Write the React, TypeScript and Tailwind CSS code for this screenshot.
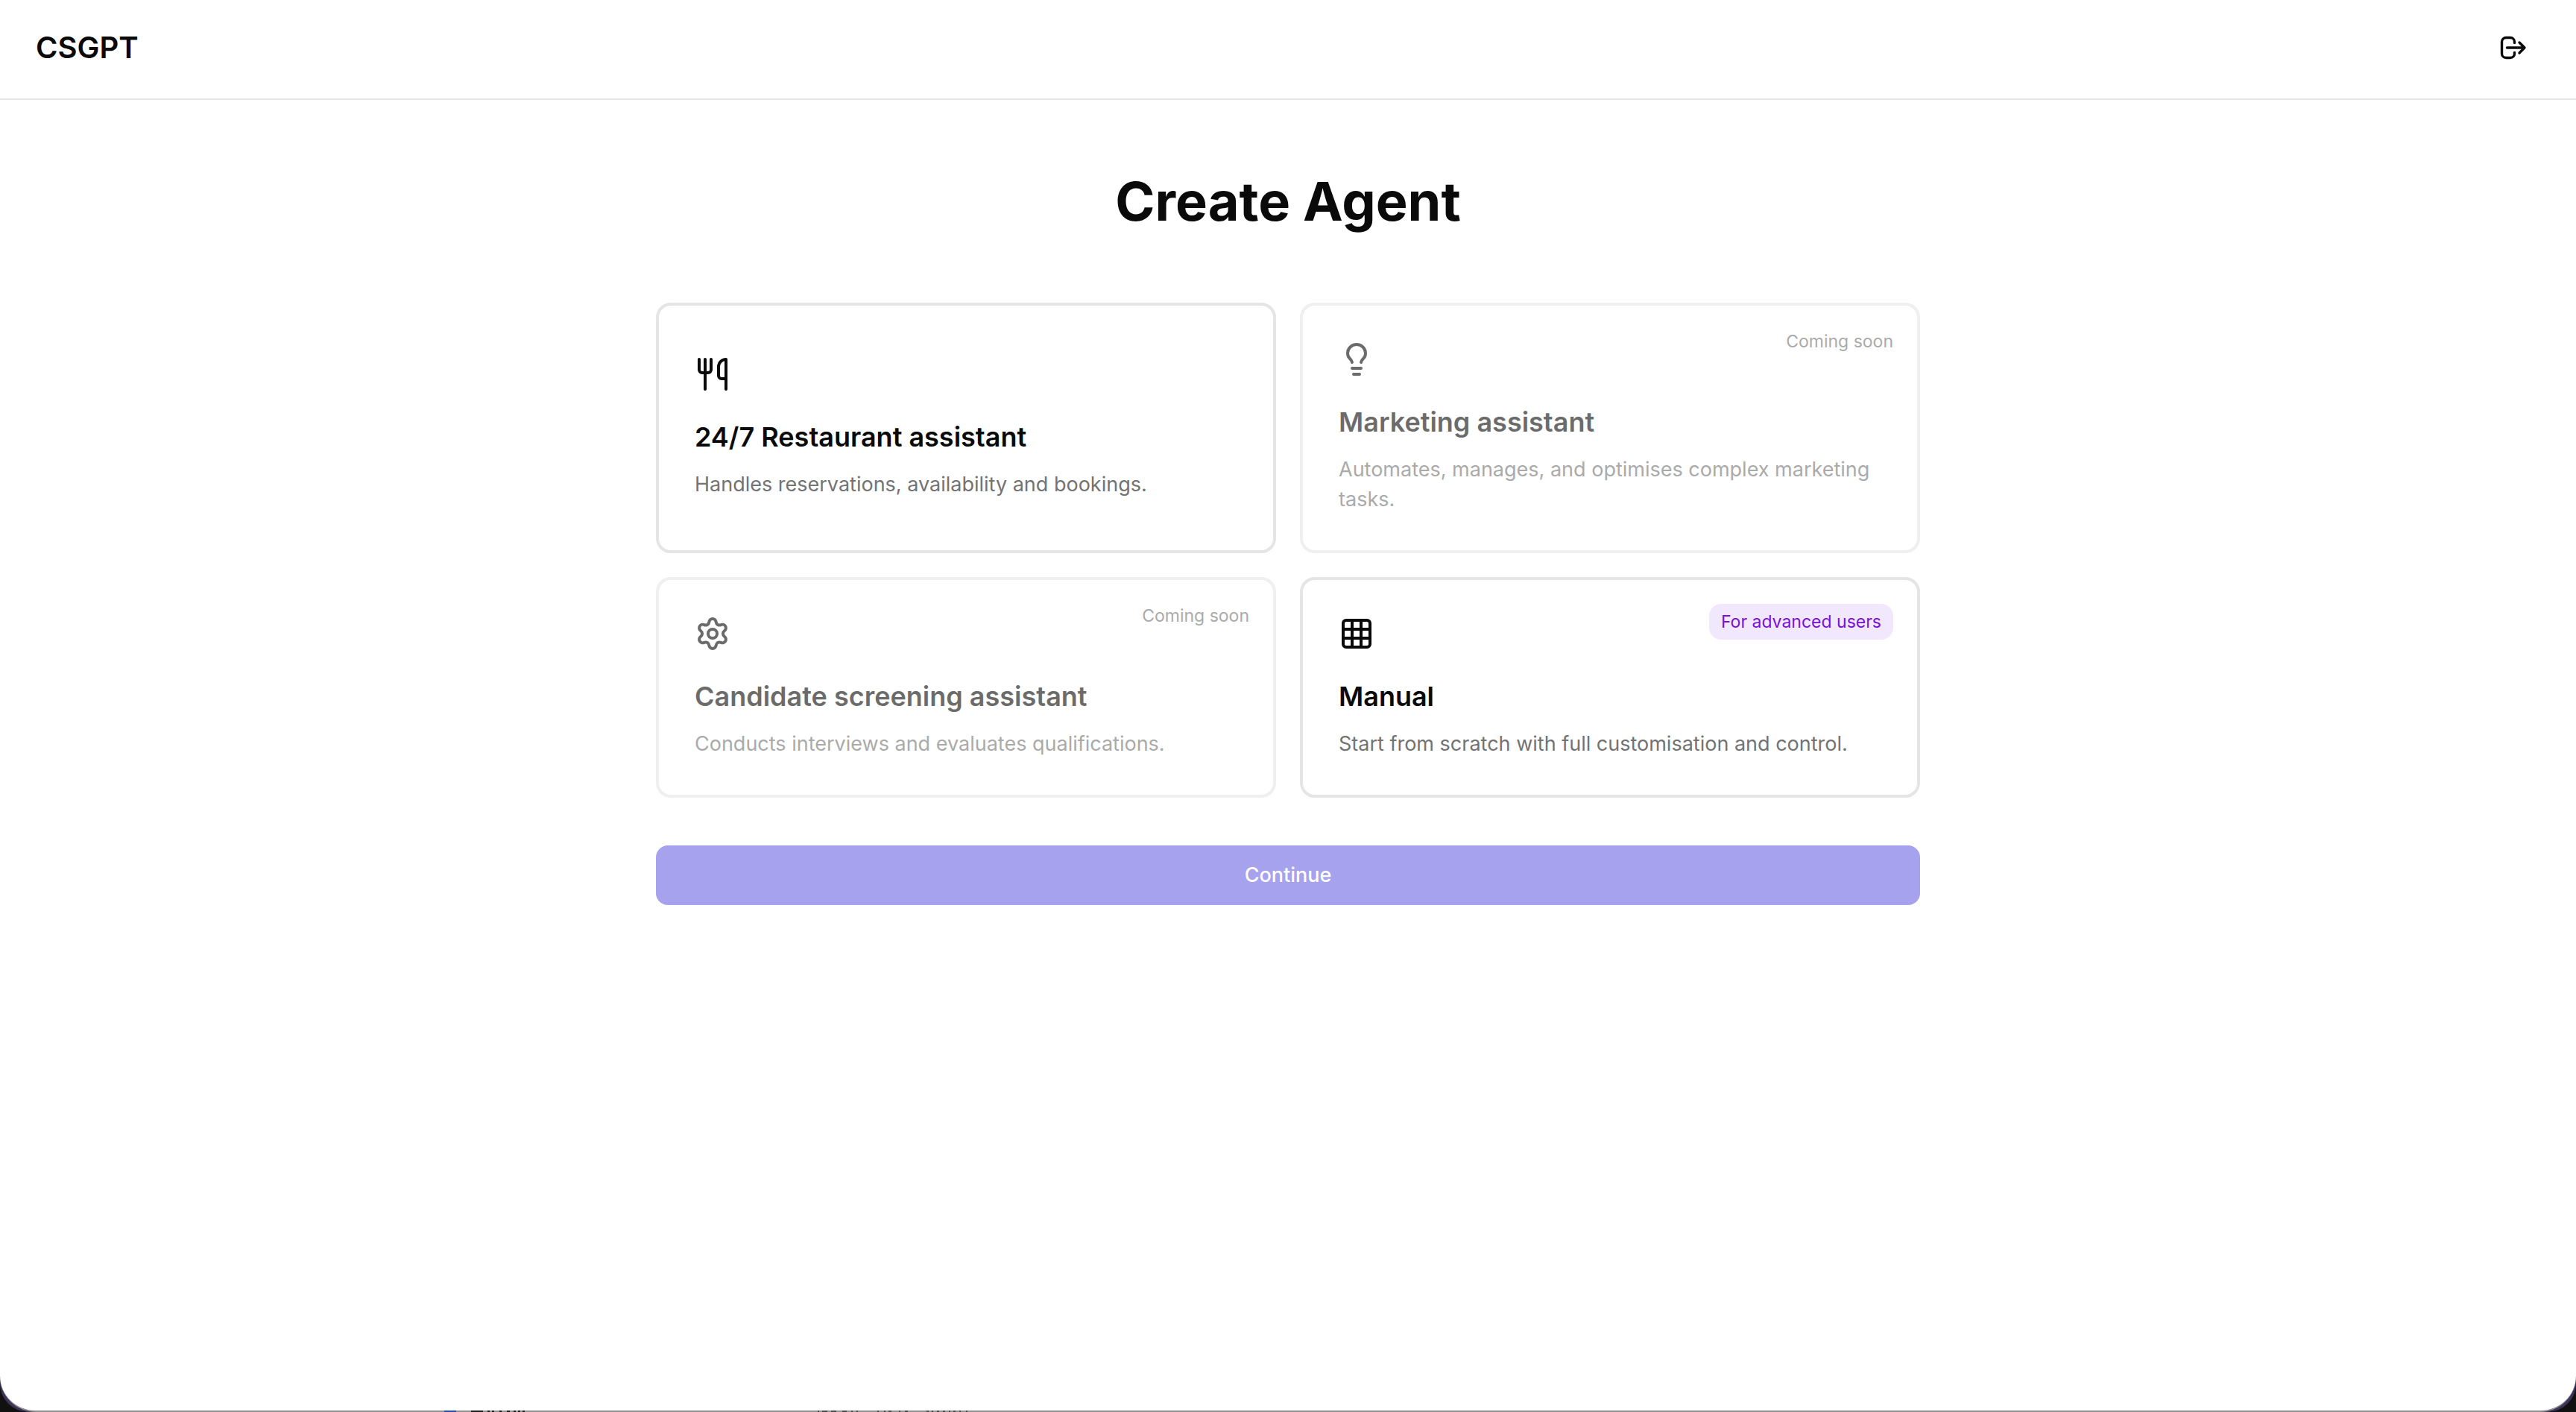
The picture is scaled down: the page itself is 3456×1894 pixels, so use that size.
import { Grid3x3, Lightbulb } from "lucide-react";
import type { ReactNode } from "react";

function IconBase({ children }: { children: ReactNode }) {
  return (
    <svg
      viewBox="0 0 24 24"
      className="size-12"
      fill="none"
      stroke="currentColor"
      strokeWidth={2}
      strokeLinecap="round"
      strokeLinejoin="round"
      aria-hidden="true"
    >
      {children}
    </svg>
  );
}

function LogoutIcon() {
  return (
    <svg
      viewBox="0 0 36 32"
      className="h-8 w-9"
      fill="none"
      stroke="currentColor"
      strokeWidth={3.4}
      strokeLinecap="round"
      strokeLinejoin="round"
      aria-hidden="true"
    >
      <path d="M19.5 9.500V8a5.500 5.500 0 0 0-5.500-5.500H8A5.500 5.500 0 0 0 2.500 8v16A5.500 5.500 0 0 0 8 29.500h6a5.500 5.500 0 0 0 5.500-5.500v-1.500" />
      <path d="M9.500 16H33M26 9l7 7-7 7" />
    </svg>
  );
}

function UtensilsIcon() {
  return (
    <IconBase>
      <path d="M3 2v7c0 1.100.9 2 2 2h4a2 2 0 0 0 2-2V2" />
      <path d="M7 2v20" />
      <path d="M21 15V2a5 5 0 0 0-5 5v6c0 1.100.9 2 2 2h3Zm0 0v7" />
    </IconBase>
  );
}

function GearIcon() {
  return (
    <IconBase>
      <path d="M9.671 4.136a2.340 2.340 0 0 1 4.659 0 2.340 2.340 0 0 0 3.319 1.915 2.340 2.340 0 0 1 2.330 4.033 2.340 2.340 0 0 0 0 3.831 2.340 2.340 0 0 1-2.330 4.033 2.340 2.340 0 0 0-3.319 1.915 2.340 2.340 0 0 1-4.659 0 2.340 2.340 0 0 0-3.320-1.915 2.340 2.340 0 0 1-2.330-4.033 2.340 2.340 0 0 0 0-3.831A2.340 2.340 0 0 1 6.350 6.051a2.340 2.340 0 0 0 3.319-1.915" />
      <circle cx="12" cy="12" r="3" />
    </IconBase>
  );
}

type Agent = {
  title: string;
  text: string;
  icon: ReactNode;
  soon?: boolean;
  badge?: string;
};

const agents: Agent[] = [
  {
    title: "24/7 Restaurant assistant",
    text: "Handles reservations, availability and bookings.",
    icon: <UtensilsIcon />,
  },
  {
    title: "Marketing assistant",
    text: "Automates, manages, and optimises complex marketing tasks.",
    icon: <Lightbulb className="size-12" aria-hidden="true" />,
    soon: true,
  },
  {
    title: "Candidate screening assistant",
    text: "Conducts interviews and evaluates qualifications.",
    icon: <GearIcon />,
    soon: true,
  },
  {
    title: "Manual",
    text: "Start from scratch with full customisation and control.",
    icon: <Grid3x3 className="size-12" aria-hidden="true" />,
    badge: "For advanced users",
  },
];

function AgentCard({ agent }: { agent: Agent }) {
  return (
    <button
      type="button"
      disabled={agent.soon}
      className="relative flex flex-col justify-center rounded-[20px] border-4 border-[#e5e5e5] p-12 text-left disabled:opacity-60"
    >
      {agent.icon}
      <span className="mt-8 text-4xl leading-[56px] font-semibold">{agent.title}</span>
      <span className="mt-4 text-[27px] leading-10 text-[#737373]">{agent.text}</span>
      {agent.soon && (
        <span className="absolute top-8 right-8 text-[23px] leading-8 text-[#737373]">Coming soon</span>
      )}
      {agent.badge && (
        <span className="absolute top-8 right-8 rounded-2xl bg-[#f1e8fd] px-4 py-2 text-[23px] leading-8 text-[#7a10d6]">
          {agent.badge}
        </span>
      )}
    </button>
  );
}

/* Sliver of the window behind, showing below the bottom edge. */
function BackgroundSliver() {
  return (
    <svg className="absolute bottom-0 left-0 h-0.5 w-full" aria-hidden="true">
      <rect x="596" width="16" height="2" fill="#2450a0" />
      <path
        d="M632 1h16M654 1h3M660 1h3M670 1h3M680 1h4M689 1h3M695 1h3M701 1h3"
        stroke="#1c1c1c"
        strokeWidth="2"
      />
      <path
        d="M1097 1h2M1103 1h7M1115 1h7M1130 1h6M1142 1h2M1149 1h2M1177 1h2M1186 1h2M1192 1h4M1206 1h2M1214 1h4M1243 1h3M1250 1h2M1257 1h3M1265 1h3M1273 1h2M1279 1h3M1287 1h2M1296 1h2"
        stroke="#4a4a4a"
        strokeWidth="2"
      />
    </svg>
  );
}

export default function App() {
  return (
    <div className="relative min-h-screen bg-[#111111] font-['Inter',sans-serif] text-[#0a0a0a]">
      <div className="rounded-b-[38px] bg-[#3e3359]">
        <div className="flex min-h-screen flex-col rounded-b-[48px] border-b-2 border-[#8f8f8f] bg-white">
          <header className="flex items-center justify-between border-b-2 border-[#e5e5e5] px-12 pt-7 pb-8">
            <span className="text-[40px] leading-[56px] font-semibold">CSGPT</span>
            <button type="button" aria-label="Log out" className="flex size-[72px] items-center justify-center">
              <LogoutIcon />
            </button>
          </header>
          <main className="mx-auto w-full max-w-[1696px] py-24">
            <h1 className="text-center text-7xl leading-[80px] font-bold">Create Agent</h1>
            <div className="mt-24 grid grid-cols-2 gap-8">
              {agents.map((agent) => (
                <AgentCard key={agent.title} agent={agent} />
              ))}
            </div>
            <button
              type="button"
              disabled
              className="mt-16 h-20 w-full rounded-2xl bg-[#a6a2ee] text-[27px] leading-10 font-medium text-white"
            >
              Continue
            </button>
          </main>
        </div>
      </div>
      <BackgroundSliver />
    </div>
  );
}
